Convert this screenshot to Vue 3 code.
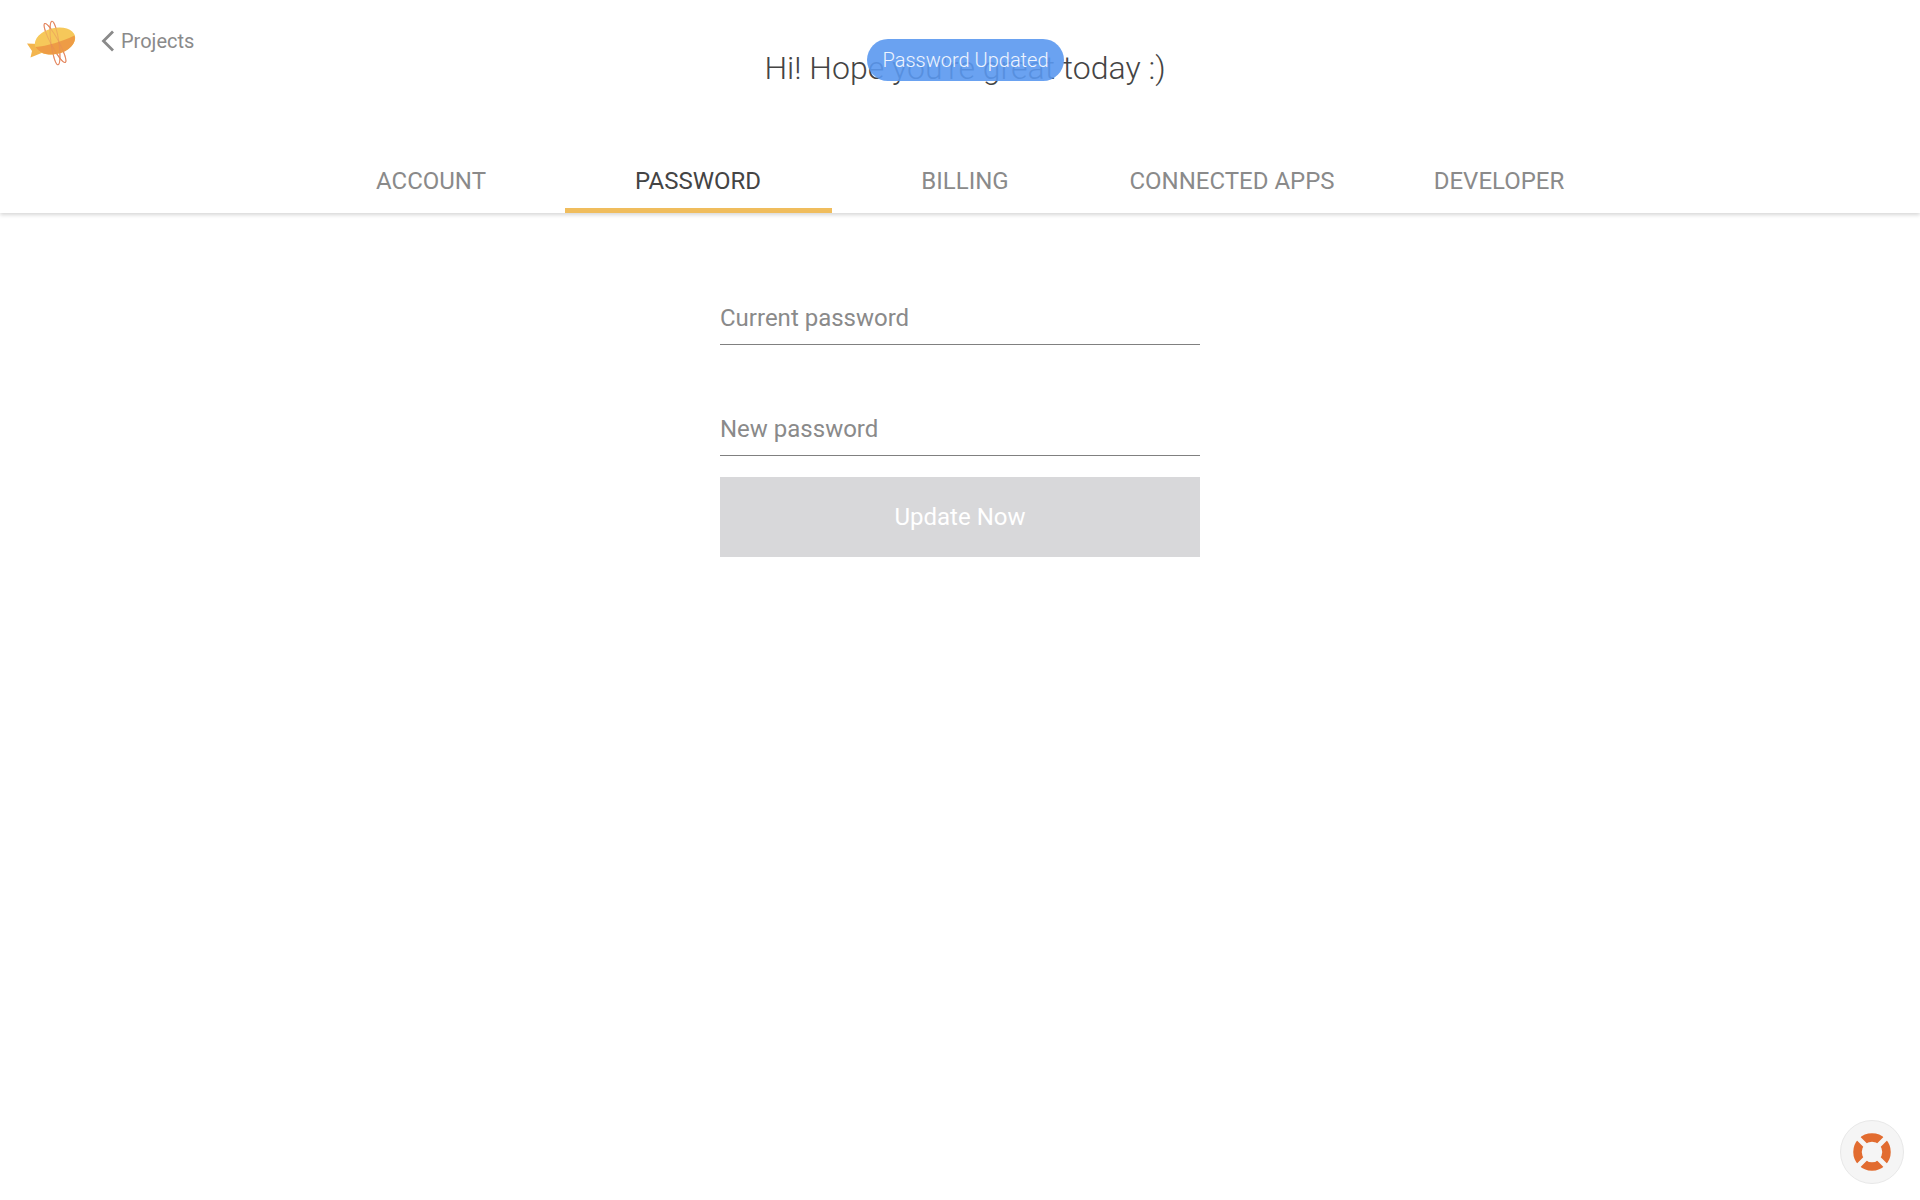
<template>
  <div class="page">
    <header class="header">
      <div class="top-bar">
        <div class="brand">
          <svg class="logo" width="50" height="50" viewBox="0 -4 50 50">
            <ellipse cx="28" cy="23" rx="4" ry="22" transform="rotate(-28 28 23)" fill="none" stroke="#e4875f" stroke-width="1.100" />
            <ellipse cx="28" cy="23" rx="4" ry="22" transform="rotate(-8 28 23)" fill="none" stroke="#e4875f" stroke-width="1.100" />
            <path d="M12 24 0 23.500 5 31 3.500 37.500 17 32Z" fill="#f3b54e" />
            <ellipse cx="28" cy="21" rx="20.500" ry="13" transform="rotate(-14 28 21)" fill="#f6c85a" />
            <path d="M8.500 27C20 26 35 21.500 47.500 15.500 49.500 21 45 29 34.500 32.800 23 36.500 12.500 34 8.500 27Z" fill="#ee9c45" />
            <ellipse cx="28" cy="23" rx="4" ry="22" transform="rotate(-28 28 23)" fill="none" stroke="#e4875f" stroke-width="1" opacity="0.45" />
            <ellipse cx="28" cy="23" rx="4" ry="22" transform="rotate(-8 28 23)" fill="none" stroke="#e4875f" stroke-width="1" opacity="0.45" />
          </svg>
          <a class="back-link">
            <svg width="14" height="24" viewBox="0 0 14 24">
              <path d="M12 2.500 2.500 12l9.500 9.500" fill="none" stroke="#8a8a8a" stroke-width="2.800" />
            </svg>
            <span>Projects</span>
          </a>
        </div>
        <h1 class="greeting">Hi! Hope you're great today :)</h1>
      </div>
      <nav class="tabs">
        <a v-for="tab in tabs" :key="tab" class="tab" :class="{ active: tab === activeTab }">{{ tab }}</a>
      </nav>
      <div class="toast">Password Updated</div>
    </header>

    <main class="form">
      <input class="field" type="password" placeholder="Current password" />
      <input class="field" type="password" placeholder="New password" />
      <button class="submit-button" disabled>Update Now</button>
    </main>

    <button class="help-button">
      <svg width="40" height="40" viewBox="0 0 40 40">
        <circle cx="20" cy="20" r="14.500" fill="none" stroke="#e26c30" stroke-width="8.500" />
        <path d="M4 4l10 10M36 4 26 14M4 36l10-10M36 36 26 26" stroke="#f5f5f5" stroke-width="5" />
      </svg>
    </button>
  </div>
</template>

<script setup>
const tabs = ['ACCOUNT', 'PASSWORD', 'BILLING', 'CONNECTED APPS', 'DEVELOPER']
const activeTab = 'PASSWORD'
</script>

<style>
html,
body {
  background: #fff;
}
</style>

<style scoped>
.page {
  position: relative;
  height: 1200px;
  overflow: hidden;
  font-family: Roboto, "Liberation Sans", sans-serif;
}

.header {
  position: relative;
  height: 213px;
  box-shadow: 0 2px 4px rgba(0, 0, 0, 0.16);
}

.top-bar {
  display: grid;
  grid-template-columns: 1fr auto 1fr;
  height: 152px;
  padding-left: 10px;
}

.brand {
  display: flex;
  align-items: center;
  gap: 24px;
  height: 50px;
  margin: 16px 0 0 17px;
}

.back-link {
  display: flex;
  align-items: center;
  gap: 6px;
  font-size: 20px;
  color: #8a8a8a;
}

.greeting {
  margin: 49px 0 0;
  font-size: 32px;
  line-height: 38px;
  font-weight: 300;
  color: #444;
}

.tabs {
  display: flex;
  justify-content: center;
  padding-left: 10px;
}

.tab {
  box-sizing: border-box;
  width: 267px;
  height: 61px;
  padding-top: 15px;
  text-align: center;
  font-size: 24px;
  line-height: 28px;
  color: #8a8a8a;
}

.tab.active {
  color: #444;
  border-bottom: 5px solid #f0bd5d;
}

.toast {
  position: absolute;
  top: 39px;
  left: 867px;
  width: 197px;
  height: 42px;
  border-radius: 21px;
  background: rgba(90, 152, 240, 0.9);
  color: #eef4fe;
  font-size: 20px;
  font-weight: 300;
  line-height: 42px;
  text-align: center;
}

.form {
  display: flex;
  flex-direction: column;
  width: 480px;
  margin: 0 auto;
  padding-top: 79px;
}

.field {
  box-sizing: border-box;
  height: 53px;
  padding: 0;
  border: none;
  border-bottom: 1px solid #808080;
  outline: none;
  font-family: inherit;
  font-size: 24px;
}

.field + .field {
  margin-top: 58px;
}

.field::placeholder {
  color: #8a8a8a;
  opacity: 1;
}

.submit-button {
  height: 80px;
  margin-top: 21px;
  border: none;
  background: #d8d8da;
  color: #fff;
  font-family: inherit;
  font-size: 24px;
}

.help-button {
  position: absolute;
  right: 16px;
  bottom: 16px;
  display: flex;
  align-items: center;
  justify-content: center;
  width: 64px;
  height: 64px;
  padding: 0;
  border: 1px solid #e8e8e8;
  border-radius: 50%;
  background: #f5f5f5;
}
</style>
